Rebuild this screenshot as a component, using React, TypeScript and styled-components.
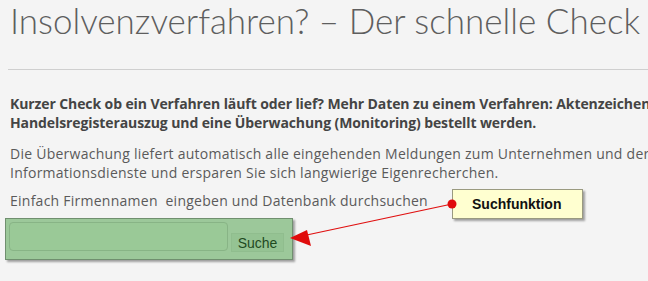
import styled, { createGlobalStyle } from "styled-components";

const Global = createGlobalStyle`
  html, body {
    margin: 0;
    padding: 0;
    background: #f4f4f4;
    overflow: hidden;
  }
`;

// #region styled
const Page = styled.div`
  position: relative;
  width: 648px;
  height: 281px;
  padding-left: 10px;
  box-sizing: border-box;
  overflow: hidden;
  white-space: nowrap;
`;

const Title = styled.h1`
  margin: -1px 0 0 0;
  font-family: "Lato", "Liberation Sans", sans-serif;
  font-weight: 300;
  font-size: 35px;
  line-height: 42px;
  color: #5e5e5e;
`;

const Rule = styled.hr`
  margin: 28px 0 0 -2px;
  border: 0;
  border-top: 1px solid #cfcfcf;
`;

const Text = styled.p<{ $bold?: boolean; $gap: number }>`
  margin: ${(p) => p.$gap}px 0 0;
  font-family: "Open Sans", "Liberation Sans", sans-serif;
  font-size: 14px;
  line-height: 19px;
  font-weight: ${(p) => (p.$bold ? 700 : 400)};
  letter-spacing: ${(p) => (p.$bold ? "-0.1px" : "0.25px")};
  color: ${(p) => (p.$bold ? "#444" : "#5a5a5a")};
`;

const SearchBox = styled.div`
  margin: 8px 0 0 -5px;
  width: 288px;
  height: 42px;
  box-sizing: border-box;
  display: flex;
  align-items: flex-start;
  gap: 3px;
  padding: 3px 0 0 3px;
  background: #9cc89a;
  border: 1px solid #708f6f;
  box-shadow: 2px 2px 2px rgba(0, 0, 0, 0.35);
`;

const Input = styled.div`
  width: 219px;
  height: 29px;
  box-sizing: border-box;
  border: 1px solid #88b486;
  border-radius: 4px;
  background: #9ac997;
`;

const Button = styled.div`
  margin-top: 11px;
  width: 51px;
  height: 17px;
  display: flex;
  align-items: center;
  justify-content: center;
  background: #95c393;
  border: 1px solid #90bd8e;
  font-family: "Liberation Sans", Arial, sans-serif;
  font-size: 14px;
  color: #1f4a1f;
`;

const Callout = styled.div`
  position: absolute;
  left: 452px;
  top: 189px;
  width: 131px;
  height: 30px;
  box-sizing: border-box;
  background: #ffffd0;
  border: 1px solid #9a9a80;
  box-shadow: 2px 2px 2px rgba(0, 0, 0, 0.35);
  display: flex;
  align-items: center;
  padding-left: 19px;
  font-family: "Liberation Sans", Arial, sans-serif;
  font-weight: 700;
  font-size: 14px;
  color: #111;
`;

const Arrow = styled.svg`
  position: absolute;
  left: 0;
  top: 0;
  pointer-events: none;
`;
// #endregion styled

export default function App() {
  return (
    <>
      <Global />
      <Page>
        <Title>Insolvenzverfahren? – Der schnelle Check</Title>
        <Rule />
        <Text $bold $gap={24}>
          Kurzer Check ob ein Verfahren läuft oder lief? Mehr Daten zu einem Verfahren: Aktenzeichen, Gericht und
          <br />
          Handelsregisterauszug und eine Überwachung (Monitoring) bestellt werden.
        </Text>
        <Text $gap={12}>
          Die Überwachung liefert automatisch alle eingehenden Meldungen zum Unternehmen und der
          <br />
          Informationsdienste und ersparen Sie sich langwierige Eigenrecherchen.
        </Text>
        <Text $gap={9}>Einfach Firmennamen&nbsp; eingeben und Datenbank durchsuchen</Text>
        <SearchBox>
          <Input />
          <Button>Suche</Button>
        </SearchBox>
        <Callout>Suchfunktion</Callout>
        <Arrow width="648" height="281" viewBox="0 0 648 281">
          <line x1="452" y1="204" x2="302" y2="236" stroke="#e01010" strokeWidth="1.2" />
          <polygon points="290,238 307,230 311,246" fill="#e00c0c" />
          <circle cx="452" cy="204" r="4.5" fill="#e00c0c" />
        </Arrow>
      </Page>
    </>
  );
}
